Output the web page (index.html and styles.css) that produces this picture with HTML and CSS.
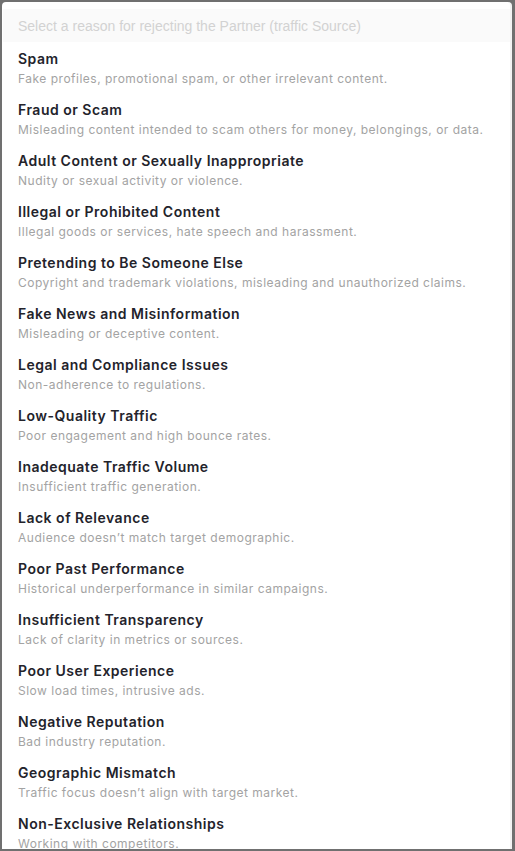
FILE: index.html
```html
<!doctype html>
<html>
<head>
<meta charset="utf-8">
<title>Reject Partner</title>
<link rel="stylesheet" href="styles.css">
</head>
<body>
<div class="backdrop">
  <div class="panel">
    <input class="search" placeholder="Select a reason for rejecting the Partner (traffic Source)">
    <ul class="reasons">
      <li><b>Spam</b><span>Fake profiles, promotional spam, or other irrelevant content.</span></li>
      <li><b>Fraud or Scam</b><span>Misleading content intended to scam others for money, belongings, or data.</span></li>
      <li><b>Adult Content or Sexually Inappropriate</b><span>Nudity or sexual activity or violence.</span></li>
      <li><b>Illegal or Prohibited Content</b><span>Illegal goods or services, hate speech and harassment.</span></li>
      <li><b>Pretending to Be Someone Else</b><span>Copyright and trademark violations, misleading and unauthorized claims.</span></li>
      <li><b>Fake News and Misinformation</b><span>Misleading or deceptive content.</span></li>
      <li><b>Legal and Compliance Issues</b><span>Non-adherence to regulations.</span></li>
      <li><b>Low-Quality Traffic</b><span>Poor engagement and high bounce rates.</span></li>
      <li><b>Inadequate Traffic Volume</b><span>Insufficient traffic generation.</span></li>
      <li><b>Lack of Relevance</b><span>Audience doesn’t match target demographic.</span></li>
      <li><b>Poor Past Performance</b><span>Historical underperformance in similar campaigns.</span></li>
      <li><b>Insufficient Transparency</b><span>Lack of clarity in metrics or sources.</span></li>
      <li><b>Poor User Experience</b><span>Slow load times, intrusive ads.</span></li>
      <li><b>Negative Reputation</b><span>Bad industry reputation.</span></li>
      <li><b>Geographic Mismatch</b><span>Traffic focus doesn’t align with target market.</span></li>
      <li><b>Non-Exclusive Relationships</b><span>Working with competitors.</span></li>
    </ul>
  </div>
</div>
</body>
</html>
```

FILE: styles.css
```css
html, body {
    margin: 0;
    padding: 0;
    height: 100%;
    overflow: hidden;
}
.backdrop {
    height: 100%;
    box-sizing: border-box;
    padding: 2px 3px 2px 2px;
    background: #707070;
}
.panel {
    height: 100%;
    background: #fff;
    border-radius: 4px 4px 0 0;
    border-right: 2px solid #f3f3f3;
    box-sizing: border-box;
    padding-top: 7px;
    overflow: hidden;
}
.search {
    display: block;
    box-sizing: border-box;
    width: calc(100% - 1px);
    height: 33px;
    margin: 0 0 0 1px;
    padding: 0 15px;
    border: 0;
    background: #fafafa;
    font-family: "Liberation Sans", Arial, sans-serif;
    font-size: 14px;
    outline: none;
}
.search::placeholder {
    color: #d2d2d2;
}
.reasons {
    list-style: none;
    margin: 0;
    padding: 0;
}
.reasons li {
    padding: 7px 16px 5px;
    font-family: Inter, "Noto Sans", sans-serif;
    letter-spacing: 0.5px;
}
.reasons b {
    display: block;
    font-size: 14px;
    line-height: 20px;
    font-weight: 600;
    color: #23232b;
}
.reasons span {
    display: block;
    margin-top: 1px;
    font-size: 12px;
    line-height: 18px;
    color: #a3a3a3;
}
```
